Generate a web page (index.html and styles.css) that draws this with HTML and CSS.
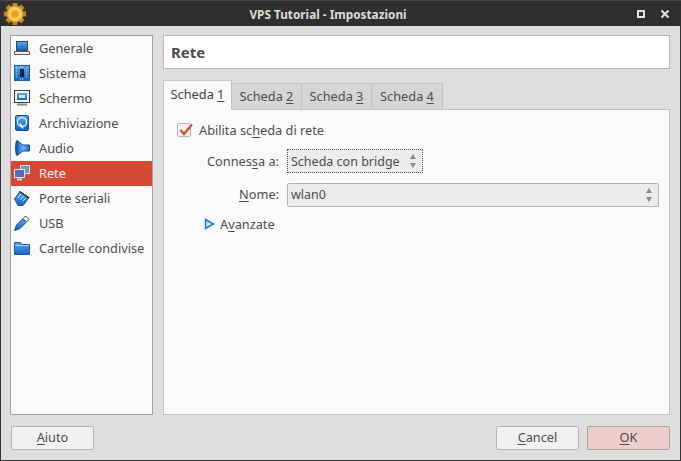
FILE: index.html
```html
<!DOCTYPE html>
<html lang="it">
<head>
    <meta charset="UTF-8">
    <title>VPS Tutorial - Impostazioni</title>
    <link rel="stylesheet" href="styles.css">
</head>
<body>

<svg class="defs" width="0" height="0">
    <defs>
        <linearGradient id="blue" x1="0" y1="0" x2="0" y2="1">
            <stop offset="0" stop-color="#5aa9f0"/>
            <stop offset="1" stop-color="#0f62c8"/>
        </linearGradient>
        <linearGradient id="blue-side" x1="0" y1="0" x2="1" y2="0">
            <stop offset="0" stop-color="#0f62c8"/>
            <stop offset="0.5" stop-color="#6db5f3"/>
            <stop offset="1" stop-color="#1468cc"/>
        </linearGradient>
        <radialGradient id="gear">
            <stop offset="0" stop-color="#e8940f"/>
            <stop offset="0.35" stop-color="#eea81f"/>
            <stop offset="0.65" stop-color="#fbd977"/>
            <stop offset="1" stop-color="#d98f1d"/>
        </radialGradient>
    </defs>
</svg>

<div class="window">
    <div class="titlebar">
        <svg class="app-icon" width="26" height="26" viewBox="0 0 26 26">
            <g stroke="#c98618" stroke-width="5">
                <path d="M13 2v22M2 13h22M5.200 5.200l15.600 15.600M20.800 5.200L5.200 20.800"/>
            </g>
            <circle cx="13" cy="13" r="8.500" fill="url(#gear)"/>
        </svg>
        <span class="title">VPS Tutorial - Impostazioni</span>
        <div class="win-buttons">
            <span class="win-max"></span>
            <svg width="8" height="8" viewBox="0 0 8 8"><path d="M.5 .5l7 7M7.500 .5l-7 7" stroke="#e4e4e4" stroke-width="2"/></svg>
        </div>
    </div>

    <div class="content">
        <div class="main">
            <ul class="sidebar">
                <li>
                    <svg width="16" height="16" viewBox="0 0 16 16"><rect x="2.500" y="1.500" width="11" height="9" fill="url(#blue)" stroke="#3e444a"/><path d="M.5 11.500h15v3H.5z" fill="#eeeeee" stroke="#5a5e62"/></svg>
                    <span>Generale</span>
                </li>
                <li>
                    <svg width="16" height="16" viewBox="0 0 16 16"><rect x=".5" y=".5" width="15" height="15" fill="url(#blue)" stroke="#1a5fb0"/><rect x="6" y="4" width="4" height="8" fill="#23262a"/><path d="M2 3h2M2 6h2M2 9h2M2 12h2M12 3h2M12 6h2M12 9h2M12 12h2M6 2h4M6 14h4" stroke="#d6e8fb" stroke-dasharray="1 1"/></svg>
                    <span>Sistema</span>
                </li>
                <li>
                    <svg width="16" height="16" viewBox="0 0 16 16"><rect x=".5" y=".5" width="15" height="12" fill="#f4f6f8" stroke="#3c4046"/><rect x="3" y="3" width="10" height="7" fill="url(#blue)"/><rect x="5" y="5" width="6" height="3" fill="#dbe9f8"/><path d="M3 14.500h10" stroke="#8a8a8a" stroke-width="2"/></svg>
                    <span>Schermo</span>
                </li>
                <li>
                    <svg width="16" height="16" viewBox="0 0 16 16"><rect x="1.500" y=".5" width="13" height="15" rx="1.500" fill="url(#blue)" stroke="#17508f"/><circle cx="8" cy="7" r="4.500" fill="none" stroke="#eef5fc" stroke-width="1.300"/><path d="M6 8.500l3 5" stroke="#eef5fc" stroke-width="1.500"/></svg>
                    <span>Archiviazione</span>
                </li>
                <li>
                    <svg width="16" height="16" viewBox="0 0 16 16"><path d="M3 .5c1.500 0 2 3.500 2 7.500s-.5 7.500-2 7.500S1 12 1 8 1.500 .5 3 .5z" fill="#0f62c8"/><path d="M3 .5L9 5h6.500v6H9l-6 4.500z" fill="url(#blue-side)" stroke="#14508f"/></svg>
                    <span>Audio</span>
                </li>
                <li class="active">
                    <svg width="16" height="16" viewBox="0 0 16 16"><rect x="6.500" y=".5" width="9" height="8" fill="#6d94cc" stroke="#ece0dc"/><rect x=".5" y="4.500" width="10" height="8" fill="#4a71b5" stroke="#ece0dc"/><path d="M3 14.500h5" stroke="#e0d6d2" stroke-width="2"/></svg>
                    <span>Rete</span>
                </li>
                <li>
                    <svg width="16" height="16" viewBox="0 0 16 16"><path d="M.5 9L6 1.500l9 6L9 15.500H4z" fill="url(#blue)" stroke="#164f8e"/><path d="M5.500 1.500l9.500 6.500" stroke="#2c3238" stroke-width="1.500"/><path d="M4 8l3-4M6.500 10l3-4M9 11.500l2.500-3.500" stroke="#d6e8fb"/></svg>
                    <span>Porte seriali</span>
                </li>
                <li>
                    <svg width="16" height="16" viewBox="0 0 16 16"><path d="M.5 15.500l2-5.500 6-6 3.500 3.500-6 6z" fill="url(#blue)" stroke="#164f8e"/><path d="M9 3.500L11.500 1l3.500 3.500-2.500 2.500z" fill="#f6f7f8" stroke="#3e444a"/></svg>
                    <span>USB</span>
                </li>
                <li>
                    <svg width="16" height="16" viewBox="0 0 16 16"><path d="M.5 2.500h6l1 2h8v10H.5z" fill="url(#blue)" stroke="#1b5a9c"/><path d="M1.500 5.500h13" stroke="#b5d8f8"/></svg>
                    <span>Cartelle condivise</span>
                </li>
            </ul>

            <div class="panel">
                <div class="heading">Rete</div>

                <div class="tabs">
                    <div class="tab current">Scheda <u>1</u></div>
                    <div class="tab">Scheda <u>2</u></div>
                    <div class="tab">Scheda <u>3</u></div>
                    <div class="tab">Scheda <u>4</u></div>
                </div>

                <div class="tab-body">
                    <div class="check-row">
                        <span class="checkbox">
                            <svg width="16" height="14" viewBox="0 0 16 14"><path d="M2.500 7l3.500 4L14 1.500" fill="none" stroke="#d64937" stroke-width="2.200"/></svg>
                        </span>
                        <span>Abilita sc<u>h</u>eda di rete</span>
                    </div>

                    <div class="form-row">
                        <label>Connes<u>s</u>a a:</label>
                        <div class="select focused">
                            <span>Scheda con bridge</span>
                            <span class="arrows"><i class="up"></i><i class="down"></i></span>
                        </div>
                    </div>

                    <div class="form-row">
                        <label><u>N</u>ome:</label>
                        <div class="select wide">
                            <span>wlan0</span>
                            <span class="arrows"><i class="up"></i><i class="down"></i></span>
                        </div>
                    </div>

                    <div class="advanced">
                        <svg width="11" height="12" viewBox="0 0 11 12"><path d="M1.500 1.500L9.500 6l-8 4.500z" fill="#cfe3f7" stroke="#1673d1" stroke-width="1.500"/></svg>
                        <span>A<u>v</u>anzate</span>
                    </div>
                </div>
            </div>
        </div>

        <div class="footer">
            <button class="btn"><u>A</u>iuto</button>
            <div class="footer-right">
                <button class="btn"><u>C</u>ancel</button>
                <button class="btn ok"><u>O</u>K</button>
            </div>
        </div>
    </div>
</div>

</body>
</html>
```

FILE: styles.css
```css
html, body {
    margin: 0;
    padding: 0;
    height: 100%;
}

body {
    font-family: 'Noto Sans', sans-serif;
    font-size: 12.75px;
    color: #4d4d4d;
    background: #333333;
    overflow: hidden;
}

u {
    text-underline-offset: 2px;
}

.defs {
    display: block;
    height: 0;
}

.window {
    width: 681px;
    height: 461px;
    display: flex;
    flex-direction: column;
}

.titlebar {
    height: 26px;
    box-sizing: border-box;
    flex: none;
    display: flex;
    align-items: center;
    background: #2f2f2f;
    border-top: 1px solid #444444;
}

.app-icon {
    margin-left: 2px;
    flex: none;
}

.title {
    flex: 1;
    margin: 0 10px 0 1px;
    text-align: center;
    font-size: 11.8px;
    font-weight: bold;
    color: #dcdcdc;
}

.win-buttons {
    margin-right: 12px;
    display: flex;
    align-items: center;
    gap: 16px;
}

.win-max {
    width: 4px;
    height: 4px;
    border: 2px solid #e4e4e4;
}

.content {
    flex: 1;
    display: flex;
    flex-direction: column;
    background: #dedede;
    margin: 0 1px 1px;
    padding: 9px 10px 10px 9px;
    min-height: 0;
}

.main {
    flex: 1;
    display: flex;
    gap: 10px;
    min-height: 0;
}

.sidebar {
    width: 141px;
    flex: none;
    list-style: none;
    margin: 0;
    padding: 0;
    background: #fafafa;
    border: 1px solid #a0a0a0;
}

.sidebar li {
    height: 25px;
    box-sizing: border-box;
    display: flex;
    align-items: center;
    gap: 9px;
    padding: 0 0 2px 3px;
}

.sidebar li.active {
    background: #d64937;
    color: #fdf2f0;
}

.panel {
    flex: 1;
    display: flex;
    flex-direction: column;
    min-width: 0;
}

.heading {
    height: 32px;
    line-height: 32px;
    padding-left: 7px;
    background: #ffffff;
    border: 1px solid #b9b9b9;
    font-size: 15px;
    font-weight: bold;
    flex: none;
}

.tabs {
    display: flex;
    align-items: flex-start;
    height: 29px;
    flex: none;
    margin-top: 11px;
    position: relative;
    z-index: 1;
}

.tab {
    width: 70px;
    height: 26px;
    line-height: 25px;
    margin-top: 3px;
    text-align: center;
    background: #d6d6d6;
    border: 1px solid #c2c2c2;
    border-left: none;
    border-bottom: none;
    border-radius: 2px 2px 0 0;
    box-sizing: border-box;
}

.tab:last-child {
    width: 71px;
}

.tab.current {
    width: 69px;
    height: 30px;
    line-height: 27px;
    margin-top: 0;
    background: #fafafa;
    border-left: 1px solid #c2c2c2;
    color: #444444;
}

.tab-body {
    flex: 1;
    background: #fafafa;
    border: 1px solid #c2c2c2;
    padding: 11px 0 0 13px;
}

.check-row {
    display: flex;
    align-items: center;
    gap: 8px;
    height: 18px;
}

.checkbox {
    width: 12px;
    height: 12px;
    display: block;
    position: relative;
    border: 1px solid #b5b5b5;
    border-radius: 2px;
    background: #f1f1f1;
}

.checkbox svg {
    position: absolute;
    left: 0;
    top: -1px;
}

.form-row {
    display: flex;
    align-items: center;
    gap: 8px;
    margin-top: 10px;
    height: 24px;
}

.form-row + .form-row label,
.select.wide span:first-child {
    padding-bottom: 2px;
}

.form-row label {
    width: 102px;
    text-align: right;
}

.select {
    width: 136px;
    height: 24px;
    box-sizing: border-box;
    display: flex;
    align-items: center;
    justify-content: space-between;
    padding: 0 3px;
    font-size: 12.5px;
    background: #ececec;
    border: 1px solid #b5b5b5;
    border-radius: 2px;
}

.select.focused {
    border: 1px dotted #555555;
    border-radius: 0;
}

.select.wide {
    width: 372px;
}

.arrows {
    display: flex;
    flex-direction: column;
    gap: 4px;
    margin-right: 3px;
}

.arrows i {
    display: block;
    width: 0;
    height: 0;
    border-left: 3px solid transparent;
    border-right: 3px solid transparent;
}

.arrows .up {
    border-bottom: 5px solid #8a8a8a;
}

.arrows .down {
    border-top: 5px solid #8a8a8a;
}

.advanced {
    display: flex;
    align-items: center;
    gap: 5px;
    margin: 8px 0 0 27px;
    height: 18px;
}

.footer {
    flex: none;
    display: flex;
    justify-content: space-between;
    margin: 11px 0 0 1px;
}

.footer-right {
    display: flex;
    gap: 8px;
}

.btn {
    width: 83px;
    height: 24px;
    padding: 0 0 2px;
    font-family: inherit;
    font-size: 12.75px;
    color: #4d4d4d;
    background: #f1f1f1;
    border: 1px solid #b5b5b5;
    border-radius: 2px;
}

.btn.ok {
    background: #eccdc9;
    border-color: #b09c99;
}
```
